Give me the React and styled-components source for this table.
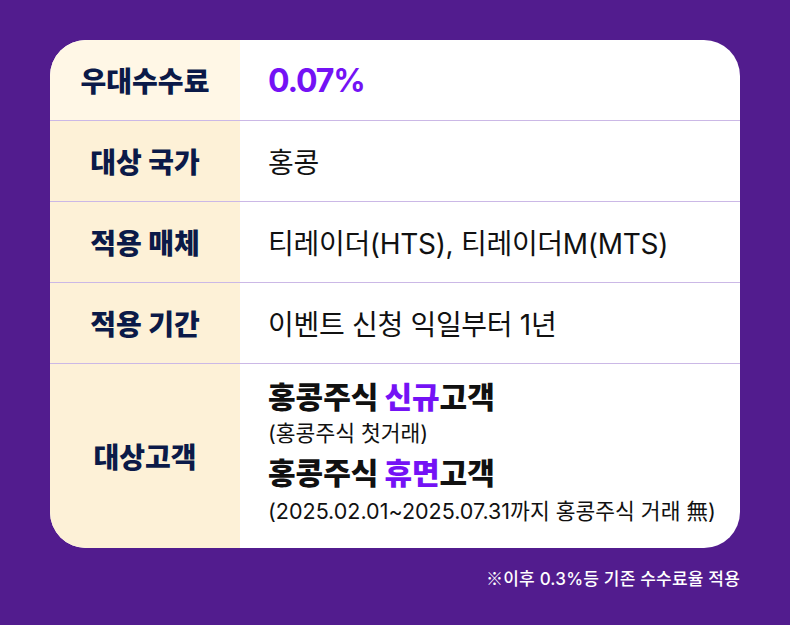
import React from "react";
import styled, { createGlobalStyle } from "styled-components";

const Global = createGlobalStyle`
  html, body { margin: 0; padding: 0; }
  body {
    background: #521c8e;
    font-family: Inter, "Noto Sans CJK KR", sans-serif;
  }
  * { box-sizing: border-box; }
`;

const Page = styled.div`
  width: 790px;
  height: 625px;
  padding: 40px 50px 0 50px;
  display: flex;
  flex-direction: column;
  align-items: stretch;
`;

const Card = styled.div`
  background: #fff;
  border-radius: 36px;
  overflow: hidden;
  display: grid;
  grid-template-columns: 190px 1fr;
`;

const Label = styled.div`
  background: ${(p) => (p.$first ? "#fff7e6" : "#fdf1d7")};
  height: ${(p) => p.$h}px;
  display: flex;
  align-items: center;
  justify-content: center;
  font-family: "Noto Sans CJK KR", sans-serif;
  font-size: 28px;
  font-weight: 900;
  color: #0b1a48;
  letter-spacing: 0;
  border-top: ${(p) => (p.$first ? "none" : "1px solid #cbb8e6")};
`;

const Value = styled.div`
  height: ${(p) => p.$h}px;
  display: flex;
  flex-direction: column;
  justify-content: center;
  padding-left: 28px;
  padding-bottom: ${(p) => p.$pb || 0}px;
  font-size: 28px;
  color: #111;
  letter-spacing: -0.3px;
  border-top: ${(p) => (p.$first ? "none" : "1px solid #cbb8e6")};
`;

const Rate = styled.span`
  font-family: Inter, sans-serif;
  font-size: 32px;
  font-weight: 700;
  color: #7412f5;
  letter-spacing: -1.2px;
`;

const Strong = styled.div`
  font-size: 30px;
  font-weight: 900;
  color: #111;
  letter-spacing: 0;
  line-height: 34px;
  margin-top: ${(p) => p.$mt || 0}px;
`;

const Purple = styled.span`
  color: #7412f5;
`;

const Sub = styled.div`
  font-size: 21.5px;
  color: #111;
  letter-spacing: 0;
  line-height: 28px;
  margin-top: ${(p) => p.$mt || 0}px;
`;

const Note = styled.div`
  align-self: flex-end;
  margin-top: 18px;
  color: #fff;
  font-size: 17px;
  line-height: 24px;
  font-weight: 500;
  letter-spacing: 0.2px;
`;

const Mark = styled.span`
  font-family: "Noto Sans CJK KR", sans-serif;
  font-weight: 700;
`;

export default function App() {
  return (
    <>
      <Global />
      <Page>
        <Card>
          <Label $first $h={80}>우대수수료</Label>
          <Value $first $h={80}><Rate>0.07%</Rate></Value>

          <Label $h={81}>대상 국가</Label>
          <Value $h={81}>홍콩</Value>

          <Label $h={81}>적용 매체</Label>
          <Value $h={81}>티레이더(HTS), 티레이더M(MTS)</Value>

          <Label $h={81}>적용 기간</Label>
          <Value $h={81}>이벤트 신청 익일부터 1년</Value>

          <Label $h={185}>대상고객</Label>
          <Value $h={185} $pb={7}>
            <Strong>홍콩주식 <Purple>신규</Purple>고객</Strong>
            <Sub $mt={5}>(홍콩주식 첫거래)</Sub>
            <Strong $mt={9}>홍콩주식 <Purple>휴면</Purple>고객</Strong>
            <Sub $mt={7}>(2025.02.01~2025.07.31까지 홍콩주식 거래 無)</Sub>
          </Value>
        </Card>
        <Note><Mark>※</Mark>이후 0.3%등 기존 수수료율 적용</Note>
      </Page>
    </>
  );
}
